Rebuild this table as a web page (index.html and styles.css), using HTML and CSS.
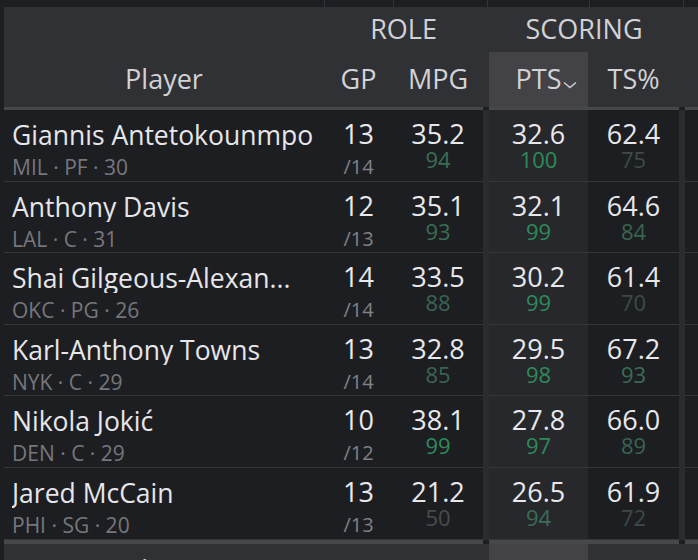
FILE: index.html
```html
<!DOCTYPE html>
<html lang="en">
  <head>
    <meta charset="UTF-8" />
    <meta name="viewport" content="width=device-width, initial-scale=1.0" />
    <title>Scoring Leaders</title>
    <link rel="stylesheet" href="styles.css">
  </head>
  <body>
    <div class="board">
      <!-- tail of the previous block -->
      <div class="prev-strip">
        <span></span><span></span><span></span><span></span><span></span><span></span>
      </div>

      <table class="stats">
        <colgroup>
          <col class="c-player" />
          <col class="c-gp" />
          <col class="c-mpg" />
          <col class="c-sep" />
          <col class="c-pts" />
          <col class="c-ts" />
          <col class="c-sep" />
          <col class="c-next" />
        </colgroup>
        <thead>
          <tr class="groups">
            <th></th>
            <th colspan="2">ROLE</th>
            <th class="sep"></th>
            <th colspan="2">SCORING</th>
            <th class="sep"></th>
            <th></th>
          </tr>
          <tr class="cols">
            <th>Player</th>
            <th>GP</th>
            <th>MPG</th>
            <th class="sep"></th>
            <th class="sorted">PTS<svg class="chev" width="14" height="8" viewBox="0 0 14 8"><polyline points="1,1.5 7,6.5 13,1.5" /></svg></th>
            <th>TS%</th>
            <th class="sep"></th>
            <th class="next">eFG%</th>
          </tr>
        </thead>
        <tbody>
          <tr>
            <td class="player"><div class="name">Giannis Antetokounmpo</div><div class="meta">MIL · PF · 30</div></td>
            <td class="gp"><div class="val">13</div><div class="of">/14</div></td>
            <td><div class="val">35.2</div><div class="pct pct-4">94</div></td>
            <td class="sep"></td>
            <td class="sorted"><div class="val">32.6</div><div class="pct pct-5">100</div></td>
            <td><div class="val">62.4</div><div class="pct pct-2">75</div></td>
            <td class="sep"></td>
            <td></td>
          </tr>
          <tr>
            <td class="player"><div class="name">Anthony Davis</div><div class="meta">LAL · C · 31</div></td>
            <td class="gp"><div class="val">12</div><div class="of">/13</div></td>
            <td><div class="val">35.1</div><div class="pct pct-4">93</div></td>
            <td class="sep"></td>
            <td class="sorted"><div class="val">32.1</div><div class="pct pct-5">99</div></td>
            <td><div class="val">64.6</div><div class="pct pct-3">84</div></td>
            <td class="sep"></td>
            <td></td>
          </tr>
          <tr>
            <td class="player"><div class="name" title="Shai Gilgeous-Alexander">Shai Gilgeous-Alexan...</div><div class="meta">OKC · PG · 26</div></td>
            <td class="gp"><div class="val">14</div><div class="of">/14</div></td>
            <td><div class="val">33.5</div><div class="pct pct-3">88</div></td>
            <td class="sep"></td>
            <td class="sorted"><div class="val">30.2</div><div class="pct pct-5">99</div></td>
            <td><div class="val">61.4</div><div class="pct pct-2">70</div></td>
            <td class="sep"></td>
            <td></td>
          </tr>
          <tr>
            <td class="player"><div class="name">Karl-Anthony Towns</div><div class="meta">NYK · C · 29</div></td>
            <td class="gp"><div class="val">13</div><div class="of">/14</div></td>
            <td><div class="val">32.8</div><div class="pct pct-3">85</div></td>
            <td class="sep"></td>
            <td class="sorted"><div class="val">29.5</div><div class="pct pct-5">98</div></td>
            <td><div class="val">67.2</div><div class="pct pct-4">93</div></td>
            <td class="sep"></td>
            <td></td>
          </tr>
          <tr>
            <td class="player"><div class="name">Nikola Jokić</div><div class="meta">DEN · C · 29</div></td>
            <td class="gp"><div class="val">10</div><div class="of">/12</div></td>
            <td><div class="val">38.1</div><div class="pct pct-5">99</div></td>
            <td class="sep"></td>
            <td class="sorted"><div class="val">27.8</div><div class="pct pct-5">97</div></td>
            <td><div class="val">66.0</div><div class="pct pct-3">89</div></td>
            <td class="sep"></td>
            <td></td>
          </tr>
          <tr>
            <td class="player"><div class="name">Jared McCain</div><div class="meta">PHI · SG · 20</div></td>
            <td class="gp"><div class="val">13</div><div class="of">/13</div></td>
            <td><div class="val">21.2</div><div class="pct pct-1">50</div></td>
            <td class="sep"></td>
            <td class="sorted"><div class="val">26.5</div><div class="pct pct-4">94</div></td>
            <td><div class="val">61.9</div><div class="pct pct-2">72</div></td>
            <td class="sep"></td>
            <td></td>
          </tr>
        </tbody>
        <tfoot>
          <tr>
            <th>Player</th>
            <th>GP</th>
            <th>MPG</th>
            <th class="sep"></th>
            <th class="sorted">PTS</th>
            <th>TS%</th>
            <th class="sep"></th>
            <th class="next">eFG%</th>
          </tr>
        </tfoot>
      </table>
    </div>
  </body>
</html>
```

FILE: styles.css
```css
/* styles.css */
body {
  margin: 0;
  padding: 0;
  background: #1d1e21;
  font-family: "Open Sans", "Noto Sans", sans-serif;
  color: #e6e6ea;
}

.board {
  width: 698px;
  height: 560px;
  overflow: hidden;
}

.prev-strip {
  display: grid;
  grid-template-columns: 324px 69px 94px 102px 94px 1fr;
  height: 7px;
}

.prev-strip span + span {
  border-left: 1px solid #34353a;
}

.stats {
  margin-left: 4px;
  width: 781px;
  table-layout: fixed;
  border-collapse: separate;
  border-spacing: 0;
}

.c-player { width: 320px; }
.c-gp { width: 69px; }
.c-mpg { width: 90px; }
.c-sep { width: 6px; }
.c-pts { width: 99px; }
.c-ts { width: 91px; }
.c-next { width: 100px; }

th {
  padding: 0;
  background: #303135;
  color: #d2d2d6;
  font-weight: 400;
  font-size: 27px;
  text-align: center;
  white-space: nowrap;
  vertical-align: top;
}

.groups th {
  height: 45px;
  line-height: 43px;
}

.cols th {
  height: 55px;
  line-height: 53px;
  border-bottom: 3px solid #47484c;
}

.cols th.sep {
  border-bottom-color: #1d1e21;
}

th.sorted {
  background: #434347;
}

th.next {
  text-align: left;
  padding-left: 12px;
}

.chev {
  margin-left: 2px;
  margin-right: -16px;
  vertical-align: 0;
}

.chev polyline {
  fill: none;
  stroke: #d2d2d6;
  stroke-width: 1.4;
}

td {
  height: 71.6px;
  padding: 10px 0 0;
  box-sizing: border-box;
  border-bottom: 1px solid #35363a;
  text-align: center;
  vertical-align: top;
}

td.sep {
  background: #2b2c30;
  border-bottom-color: #2b2c30;
}

td.sorted {
  background: #27282b;
}

td.player {
  text-align: left;
  padding-left: 8px;
  padding-right: 10px;
}

.name {
  font-size: 26.5px;
  line-height: 30px;
  color: #e6e6ea;
  white-space: nowrap;
  overflow: hidden;
  text-overflow: ellipsis;
}

.meta {
  margin-top: 5px;
  font-size: 21px;
  line-height: 24px;
  color: #76777c;
}

.val {
  font-size: 27px;
  line-height: 28px;
  color: #e8e8ec;
}

.of {
  margin-top: 7px;
  font-size: 20px;
  line-height: 24px;
  color: #808186;
}

.pct {
  font-size: 22px;
  line-height: 22px;
}

/* percentile tiers */
.pct-5 { color: #2e8a5b; }
.pct-4 { color: #3a6e56; }
.pct-3 { color: #3a6453; }
.pct-2 { color: #3c4b47; }
.pct-1 { color: #4a4b4e; }

tfoot th {
  height: 40px;
  line-height: 52px;
  border-top: 4px solid #47484c;
}

tfoot th.sep {
  border-top-color: #1d1e21;
}
```
